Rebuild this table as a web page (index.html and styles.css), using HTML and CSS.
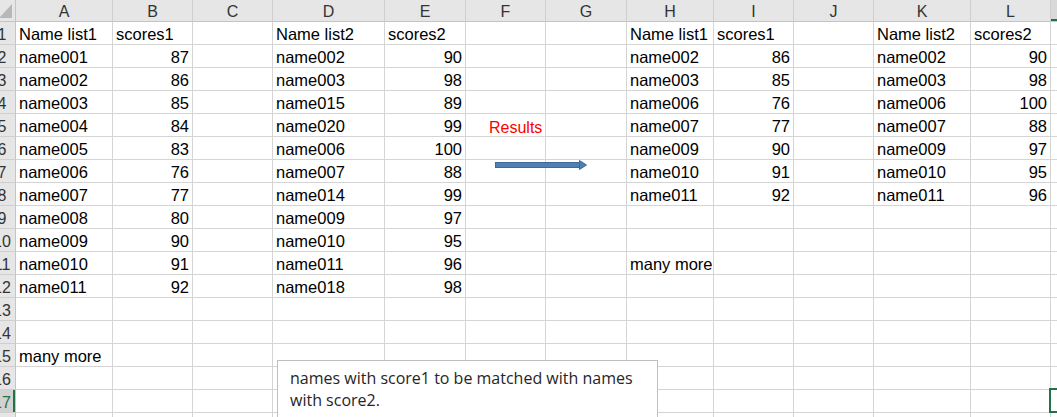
FILE: index.html
```html
<!DOCTYPE html>
<html>
<head>
<meta charset="utf-8">
<link rel="stylesheet" href="styles.css">
</head>
<body>
<div class="sheet">
  <div class="r hdr">
    <div class="corner"><svg class="tri" width="13" height="14" viewBox="0 0 13 14"><polygon points="13,0 13,14 0,14" fill="#b8b8b8"/></svg></div>
    <div class="ch">A</div><div class="ch">B</div><div class="ch">C</div><div class="ch">D</div><div class="ch">E</div><div class="ch">F</div><div class="ch">G</div><div class="ch">H</div><div class="ch">I</div><div class="ch">J</div><div class="ch">K</div><div class="ch">L</div><div class="ch selc">M</div>
  </div>
  <div class="r"><div class="h">1</div><div class="c">Name list1</div><div class="c">scores1</div><div class="c"></div><div class="c">Name list2</div><div class="c">scores2</div><div class="c"></div><div class="c"></div><div class="c">Name list1</div><div class="c">scores1</div><div class="c"></div><div class="c">Name list2</div><div class="c">scores2</div><div class="c"></div></div>
  <div class="r"><div class="h">2</div><div class="c">name001</div><div class="c n">87</div><div class="c"></div><div class="c">name002</div><div class="c n">90</div><div class="c"></div><div class="c"></div><div class="c">name002</div><div class="c n">86</div><div class="c"></div><div class="c">name002</div><div class="c n">90</div><div class="c"></div></div>
  <div class="r"><div class="h">3</div><div class="c">name002</div><div class="c n">86</div><div class="c"></div><div class="c">name003</div><div class="c n">98</div><div class="c"></div><div class="c"></div><div class="c">name003</div><div class="c n">85</div><div class="c"></div><div class="c">name003</div><div class="c n">98</div><div class="c"></div></div>
  <div class="r"><div class="h">4</div><div class="c">name003</div><div class="c n">85</div><div class="c"></div><div class="c">name015</div><div class="c n">89</div><div class="c"></div><div class="c"></div><div class="c">name006</div><div class="c n">76</div><div class="c"></div><div class="c">name006</div><div class="c n">100</div><div class="c"></div></div>
  <div class="r"><div class="h">5</div><div class="c">name004</div><div class="c n">84</div><div class="c"></div><div class="c">name020</div><div class="c n">99</div><div class="c"></div><div class="c"></div><div class="c">name007</div><div class="c n">77</div><div class="c"></div><div class="c">name007</div><div class="c n">88</div><div class="c"></div></div>
  <div class="r"><div class="h">6</div><div class="c">name005</div><div class="c n">83</div><div class="c"></div><div class="c">name006</div><div class="c n">100</div><div class="c"></div><div class="c"></div><div class="c">name009</div><div class="c n">90</div><div class="c"></div><div class="c">name009</div><div class="c n">97</div><div class="c"></div></div>
  <div class="r"><div class="h">7</div><div class="c">name006</div><div class="c n">76</div><div class="c"></div><div class="c">name007</div><div class="c n">88</div><div class="c"></div><div class="c"></div><div class="c">name010</div><div class="c n">91</div><div class="c"></div><div class="c">name010</div><div class="c n">95</div><div class="c"></div></div>
  <div class="r"><div class="h">8</div><div class="c">name007</div><div class="c n">77</div><div class="c"></div><div class="c">name014</div><div class="c n">99</div><div class="c"></div><div class="c"></div><div class="c">name011</div><div class="c n">92</div><div class="c"></div><div class="c">name011</div><div class="c n">96</div><div class="c"></div></div>
  <div class="r"><div class="h">9</div><div class="c">name008</div><div class="c n">80</div><div class="c"></div><div class="c">name009</div><div class="c n">97</div><div class="c"></div><div class="c"></div><div class="c"></div><div class="c"></div><div class="c"></div><div class="c"></div><div class="c"></div><div class="c"></div></div>
  <div class="r"><div class="h">10</div><div class="c">name009</div><div class="c n">90</div><div class="c"></div><div class="c">name010</div><div class="c n">95</div><div class="c"></div><div class="c"></div><div class="c"></div><div class="c"></div><div class="c"></div><div class="c"></div><div class="c"></div><div class="c"></div></div>
  <div class="r"><div class="h">11</div><div class="c">name010</div><div class="c n">91</div><div class="c"></div><div class="c">name011</div><div class="c n">96</div><div class="c"></div><div class="c"></div><div class="c over">many more</div><div class="c"></div><div class="c"></div><div class="c"></div><div class="c"></div><div class="c"></div></div>
  <div class="r"><div class="h">12</div><div class="c">name011</div><div class="c n">92</div><div class="c"></div><div class="c">name018</div><div class="c n">98</div><div class="c"></div><div class="c"></div><div class="c"></div><div class="c"></div><div class="c"></div><div class="c"></div><div class="c"></div><div class="c"></div></div>
  <div class="r"><div class="h">13</div><div class="c"></div><div class="c"></div><div class="c"></div><div class="c"></div><div class="c"></div><div class="c"></div><div class="c"></div><div class="c"></div><div class="c"></div><div class="c"></div><div class="c"></div><div class="c"></div><div class="c"></div></div>
  <div class="r"><div class="h">14</div><div class="c"></div><div class="c"></div><div class="c"></div><div class="c"></div><div class="c"></div><div class="c"></div><div class="c"></div><div class="c"></div><div class="c"></div><div class="c"></div><div class="c"></div><div class="c"></div><div class="c"></div></div>
  <div class="r"><div class="h">15</div><div class="c over">many more</div><div class="c"></div><div class="c"></div><div class="c"></div><div class="c"></div><div class="c"></div><div class="c"></div><div class="c"></div><div class="c"></div><div class="c"></div><div class="c"></div><div class="c"></div><div class="c"></div></div>
  <div class="r"><div class="h">16</div><div class="c"></div><div class="c"></div><div class="c"></div><div class="c"></div><div class="c"></div><div class="c"></div><div class="c"></div><div class="c"></div><div class="c"></div><div class="c"></div><div class="c"></div><div class="c"></div><div class="c"></div></div>
  <div class="r"><div class="h sel">17</div><div class="c"></div><div class="c"></div><div class="c"></div><div class="c"></div><div class="c"></div><div class="c"></div><div class="c"></div><div class="c"></div><div class="c"></div><div class="c"></div><div class="c"></div><div class="c"></div><div class="c"></div></div>
  <div class="r"><div class="h">18</div><div class="c"></div><div class="c"></div><div class="c"></div><div class="c"></div><div class="c"></div><div class="c"></div><div class="c"></div><div class="c"></div><div class="c"></div><div class="c"></div><div class="c"></div><div class="c"></div><div class="c"></div></div>
</div>

<div class="results">Results</div>
<svg class="arrow" width="94" height="14" viewBox="0 0 94 14">
  <rect x="1.5" y="4.5" width="84" height="5" fill="#4f7fb5" stroke="#3f6a96" stroke-width="1"/>
  <polygon points="85.5,2.5 92.5,7 85.5,11.5" fill="#4f7fb5" stroke="#3f6a96" stroke-width="1"/>
</svg>
<div class="textbox">names with score1 to be matched with names with score2.</div>
<div class="selbox"></div>
</body>
</html>
```

FILE: styles.css
```css
html, body {
  margin: 0;
  padding: 0;
  background: #ffffff;
  overflow: hidden;
  width: 1057px;
  height: 417px;
}

body {
  position: relative;
  font-family: "Liberation Sans", Arial, sans-serif;
}

.sheet {
  margin-left: -11px;
  width: 1140px;
}

.r {
  display: grid;
  grid-template-columns: 27px 97px 80px 80px 112px 81px 80px 81px 87px 80px 80px 97px 80px 80px;
  height: 23px;
}

.r.hdr {
  height: 22px;
}

.corner {
  position: relative;
  background: #e6e6e6;
  border-right: 1px solid #c4c4c4;
  border-bottom: 1px solid #c4c4c4;
  box-sizing: border-box;
}

.tri {
  position: absolute;
  right: 3px;
  bottom: 3px;
}

.ch {
  box-sizing: border-box;
  background: #e6e6e6;
  border-right: 1px solid #cfcfcf;
  border-bottom: 1px solid #c4c4c4;
  text-align: center;
  font-size: 16px;
  line-height: 19px;
  padding-top: 2px;
  color: #333333;
}

.ch.selc {
  box-shadow: inset 0 -2px 0 #217346;
  background: #d9d9d9;
}

.h {
  box-sizing: border-box;
  background: #e6e6e6;
  border-right: 1px solid #c4c4c4;
  border-bottom: 1px solid #cfcfcf;
  text-align: center;
  font-size: 16px;
  line-height: 19px;
  padding-top: 3px;
  color: #333333;
}

.h.sel {
  background: #d2d2d2;
  color: #217346;
  box-shadow: inset -2px 0 0 #217346;
}

.c {
  box-sizing: border-box;
  border-right: 1px solid #d4d4d4;
  border-bottom: 1px solid #d4d4d4;
  font-size: 16.5px;
  line-height: 19px;
  padding: 3px 3px 0 3px;
  color: #000000;
  white-space: nowrap;
}

.c.n {
  text-align: right;
}

.c.over {
  overflow: visible;
  position: relative;
  z-index: 1;
}

.results {
  position: absolute;
  left: 489px;
  top: 119px;
  font-size: 16px;
  line-height: 18px;
  color: #ff0000;
}

.arrow {
  position: absolute;
  left: 494px;
  top: 158px;
}

.textbox {
  position: absolute;
  left: 277px;
  top: 360px;
  width: 381px;
  height: 80px;
  box-sizing: border-box;
  border: 1px solid #bfbfbf;
  background: #ffffff;
  padding: 6px 10px 0 12px;
  font-family: "Open Sans", "Liberation Sans", sans-serif;
  font-size: 16px;
  line-height: 22px;
  color: #262626;
}

.selbox {
  position: absolute;
  left: 1049px;
  top: 388px;
  width: 30px;
  height: 25px;
  box-sizing: border-box;
  border: 2px solid #217346;
}
```
